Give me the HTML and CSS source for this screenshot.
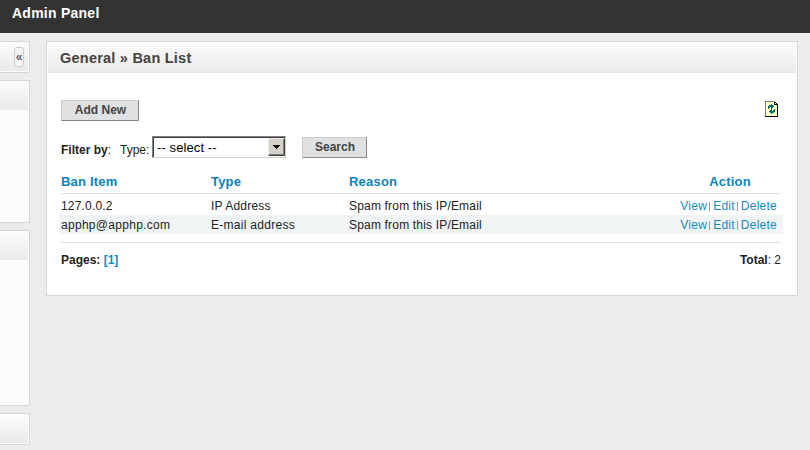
FILE: index.html
```
<!DOCTYPE html>
<html lang="en">
<head>
<meta charset="utf-8">
<title>Admin Panel</title>
<link rel="stylesheet" href="styles.css">
</head>
<body>
<header class="top">Admin Panel</header>
<div class="layout">
  <aside class="side">
    <div class="box box-toggle"><div class="cap"><button class="collapse">«</button></div></div>
    <div class="box box-a"><div class="cap"></div></div>
    <div class="box box-b"><div class="cap"></div></div>
    <div class="box box-c"><div class="cap"></div></div>
  </aside>
  <main class="panel">
    <h1 class="title">General » Ban List</h1>
    <div class="content">
      <div class="tools">
        <button class="btn add">Add New</button>
        <svg class="refresh" width="13" height="16" viewBox="0 0 13 16" shape-rendering="crispEdges">
          <path fill="#ffffc8" d="M0 0h9l4 4v12H0z"/>
          <path fill="#fff" d="M9 0h4v4H9z"/>
          <path fill="#808080" d="M0 0h10v1H1v14H0z"/>
          <path fill="#000" d="M9 1h2v1h1v1h1v13H0v-1h12V4H9z"/>
          <path fill="#fff" d="M10 2h1v1h-1z"/>
          <path fill="#006868" d="M6 3h1v1h1v1h1v1H8v1H7v1H6V6H5v1H4v1H3V5h1V4h2zM7 13H6v-1H5v-1H4v-1h1V9h1V8h1v2h1V9h1V8h1v3H9v1H7z"/>
        </svg>
      </div>
      <div class="filter">
        <span class="by"><b>Filter by</b>:</span>
        <span class="type">Type:</span>
        <div class="select"><span>-- select --</span><span class="drop"><svg width="7" height="4" viewBox="0 0 7 4" shape-rendering="crispEdges"><path d="M0 0h7v1H6v1H5v1H4v1H3V3H2V2H1V1H0z"/></svg></span></div>
        <button class="btn search">Search</button>
      </div>
      <div class="row head"><span>Ban Item</span><span>Type</span><span>Reason</span><span class="center">Action</span></div>
      <div class="rows">
        <div class="row"><span>127.0.0.2</span><span>IP Address</span><span>Spam from this IP/Email</span><span class="actions"><a>View</a><i></i><a>Edit</a><i></i><a>Delete</a></span></div>
        <div class="row alt"><span class="wide">apphp@apphp.com</span><span class="wide">E-mail address</span><span>Spam from this IP/Email</span><span class="actions"><a>View</a><i></i><a>Edit</a><i></i><a>Delete</a></span></div>
      </div>
      <div class="foot"><b>Pages: <a>[1]</a></b><span><b>Total</b>: 2</span></div>
    </div>
  </main>
</div>
</body>
</html>
```
FILE: styles.css
```
* { box-sizing: border-box; }
body { margin: 0; height: 450px; overflow: hidden; background: #ebedec; color: #222; font: 12px/19px "Liberation Sans", Arial, sans-serif; }
button { font-family: inherit; padding: 0; margin: 0; }
.top { height: 33px; background: #333; color: #fff; font-weight: bold; font-size: 14px; line-height: 26px; padding-left: 12px; letter-spacing: .25px; }
.layout { display: flex; gap: 16px; align-items: flex-start; padding-top: 8px; }
.side { width: 30px; display: flex; flex-direction: column; gap: 7px; }
.box { border: 1px solid #d5d7d6; border-left: 0; background: #fcfcfc; padding: 1px 1px 1px 0; }
.cap { height: 28px; background: linear-gradient(#fcfcfc, #e9e9e9); }
.box-toggle { height: 32px; }
.box-toggle .cap { display: flex; justify-content: flex-end; padding: 4px 4px 0 0; }
.box-a { height: 143px; }
.box-b { height: 176px; }
.box-c { height: 32px; }
.collapse { width: 10px; height: 20px; border: 1px solid #ccc; border-radius: 3px; background: #f5f5f5; color: #56616a; font-size: 12px; font-weight: bold; line-height: 16px; }
.panel { width: 752px; height: 255px; border: 1px solid #d5d7d6; background: #fff; padding: 1px; }
.title { margin: 0; height: 30px; padding-left: 12px; background: linear-gradient(#fcfcfc, #e9e9e9); color: #444; font-size: 14.5px; line-height: 30px; letter-spacing: .23px; }
.content { padding: 27px 15px 0 13px; }
.tools { display: flex; justify-content: space-between; padding-right: 3px; align-items: flex-start; }
.refresh { margin-top: 1px; display: block; }
.btn { height: 21px; background: #e0e1e3; border: 1px solid; border-color: #ccc #888 #888 #ccc; color: #444; font-size: 12px; font-weight: bold; line-height: 17px; padding: 0 0 1px 1px; }
.add { width: 78px; }
.filter { display: flex; margin-top: 15px; height: 22px; }
.filter > span { line-height: 28px; white-space: nowrap; }
.by { width: 59px; }
.type { width: 32px; }
.select { width: 134px; height: 22px; border: 1px solid; border-color: #808080 #d4d0c8 #d4d0c8 #808080; box-shadow: inset 1px 1px #404040; display: flex; justify-content: space-between; padding: 1px 0 0 4px; color: #000; font-size: 13px; line-height: 20px; letter-spacing: .1px; }
.drop { width: 17px; height: 18px; background: #d4d0c8; border: 1px solid; border-color: #eee #404040 #404040 #eee; box-shadow: inset -1px -1px #808080; display: flex; align-items: center; justify-content: center; }
.search { width: 65px; margin: 1px 0 0 16px; }
.row { display: grid; grid-template-columns: 150px 138px 330px 1fr; height: 19px; padding: 0 2px; line-height: 20px; letter-spacing: .18px; white-space: nowrap; }
.wide { letter-spacing: .29px; }
.row.head { margin-top: 13px; height: 23px; padding: 0; border-bottom: 1px solid #e0e0e0; color: #0f83b8; font-size: 13px; line-height: 21px; font-weight: bold; letter-spacing: .2px; }
.center { text-align: center; }
.rows { margin: 2px -2px 0; padding-bottom: 8px; }
.alt { background: #f0f4f5; }
a { color: #178ac0; }
.actions { display: flex; justify-content: flex-end; padding-right: 4px; }
.actions a { letter-spacing: .25px; }
.actions i { width: 1px; height: 9px; background: #999; margin: 6px 3px 0 2px; }
.foot { border-top: 1px solid #e0e0e0; padding-top: 8px; display: flex; justify-content: space-between; }
```
